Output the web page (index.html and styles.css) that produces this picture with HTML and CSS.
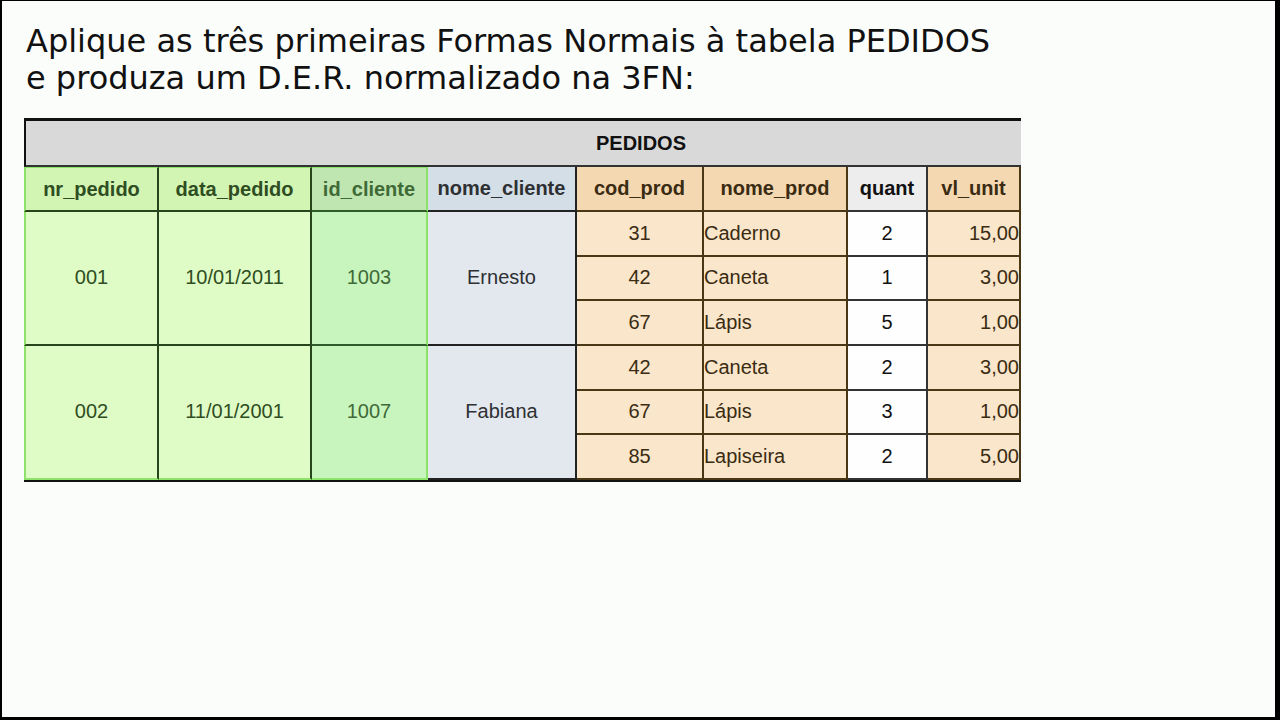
FILE: index.html
```html
<!DOCTYPE html>
<html lang="pt">
<head>
<meta charset="utf-8">
<title>PEDIDOS</title>
<link rel="stylesheet" href="styles.css">
</head>
<body>
<div class="frame">
  <h1 class="title">Aplique as três primeiras Formas Normais à tabela PEDIDOS<br>e produza um D.E.R. normalizado na 3FN:</h1>
  <div class="grid">
    <div class="cell caption">PEDIDOS</div>

    <div class="cell h g edge">nr_pedido</div>
    <div class="cell h g">data_pedido</div>
    <div class="cell h gk">id_cliente</div>
    <div class="cell h b">nome_cliente</div>
    <div class="cell h o">cod_prod</div>
    <div class="cell h o">nome_prod</div>
    <div class="cell h w">quant</div>
    <div class="cell h o">vl_unit</div>

    <div class="cell d g span3 edge">001</div>
    <div class="cell d g span3">10/01/2011</div>
    <div class="cell d gk span3">1003</div>
    <div class="cell d b span3">Ernesto</div>
    <div class="cell d o">31</div>
    <div class="cell d o left">Caderno</div>
    <div class="cell d w">2</div>
    <div class="cell d o right">15,00</div>

    <div class="cell d o">42</div>
    <div class="cell d o left">Caneta</div>
    <div class="cell d w">1</div>
    <div class="cell d o right">3,00</div>

    <div class="cell d o">67</div>
    <div class="cell d o left">Lápis</div>
    <div class="cell d w">5</div>
    <div class="cell d o right">1,00</div>

    <div class="cell d g span3 edge bottom">002</div>
    <div class="cell d g span3 bottom">11/01/2001</div>
    <div class="cell d gk span3 bottom">1007</div>
    <div class="cell d b span3">Fabiana</div>
    <div class="cell d o">42</div>
    <div class="cell d o left">Caneta</div>
    <div class="cell d w">2</div>
    <div class="cell d o right">3,00</div>

    <div class="cell d o">67</div>
    <div class="cell d o left">Lápis</div>
    <div class="cell d w">3</div>
    <div class="cell d o right">1,00</div>

    <div class="cell d o">85</div>
    <div class="cell d o left">Lapiseira</div>
    <div class="cell d w">2</div>
    <div class="cell d o right">5,00</div>
  </div>
</div>
</body>
</html>
```
FILE: styles.css
```css
* { box-sizing: border-box; }
html, body { margin: 0; padding: 0; background: #000; }
.frame {
  width: 1280px;
  height: 720px;
  background: #fbfdfa;
  border-top: 1px solid #000;
  border-left: 2px solid #000;
  border-right: 5px solid #000;
  border-bottom: 3px solid #000;
  padding: 22px 0 0 24px;
}
.title {
  margin: 0;
  font-family: "DejaVu Sans", sans-serif;
  font-weight: normal;
  font-size: 32px;
  line-height: 37px;
  color: #111;
}
.grid {
  margin-top: 21px;
  margin-left: -2px;
  width: 997px;
  display: grid;
  grid-template-columns: 135px 153px 116px 149px 127px 144px 80px 93px;
  grid-template-rows: 49px 45px repeat(6, 44.67px);
  border-bottom: 2px solid #111;
  font-family: "Liberation Sans", Arial, sans-serif;
  font-size: 20px;
}
.cell {
  display: flex;
  align-items: center;
  justify-content: center;
  border-right: 2px solid #4a3716;
  border-bottom: 2px solid #4a3716;
  white-space: nowrap;
}
.caption {
  grid-column: 1 / -1;
  background: #d9d9d9;
  border-top: 3px solid #111;
  border-left: 2px solid #111;
  border-right: none;
  border-bottom: 2px solid #333;
  padding-left: 235px;
  font-weight: bold;
  color: #111;
}
.h { font-weight: bold; }
.g { background: #e0fcc6; color: #2f4d22; border-color: #27451a; }
.h.g { background: #d3f5b3; }
.gk { background: #c8f4be; color: #3f6a37; border-color: #2f5a2a; border-right-color: #8de26a; }
.h.gk { background: #bfe6b1; }
.h.g, .h.gk { border-top: 1px solid #8de26a; }
.edge { border-left: 2px solid #8de26a; }
.bottom { border-bottom-color: #8de26a; }
.b { background: #e3e8ee; color: #2e3033; border-color: #222; }
.h.b { background: #d4dee6; }
.o { background: #f9e6cb; color: #3a2b12; }
.h.o { background: #f3d8b2; }
.w { background: #fefefe; color: #111; border-color: #333; }
.h.w { background: #ededed; }
.span3 { grid-row: span 3; }
.left { justify-content: flex-start; }
.right { justify-content: flex-end; }
```
